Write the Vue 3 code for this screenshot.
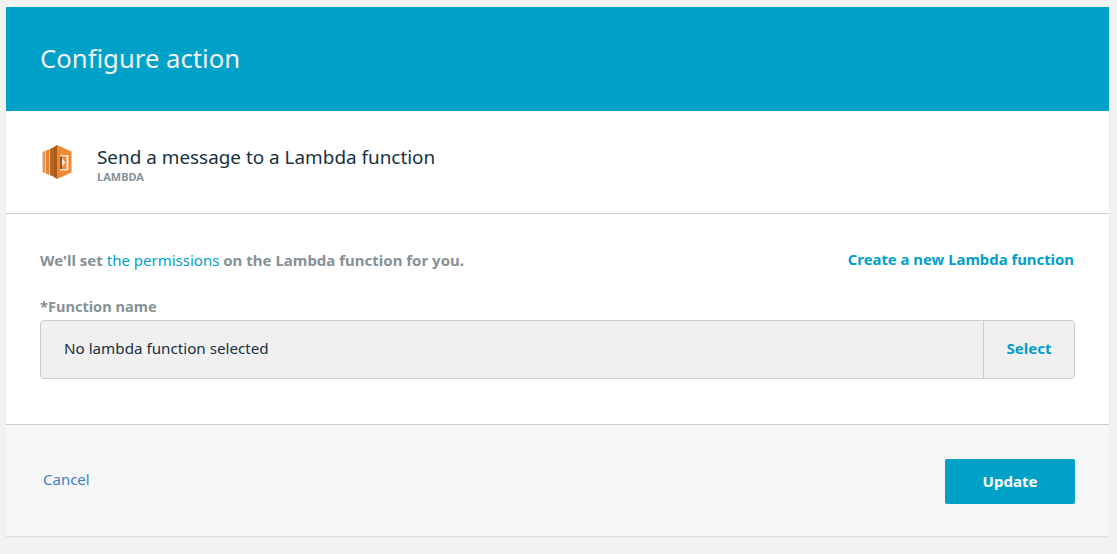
<template>
  <div class="page">
    <div class="card">
      <header class="card__head">
        <h1 class="card__title">Configure action</h1>
      </header>

      <div class="action">
        <svg class="action__icon" width="30" height="34" viewBox="0 0 30 34" aria-hidden="true">
          <path fill="#dd9a63" d="M.500 7 3.500 5.500v23l-3-1.500z" />
          <path fill="#e8842f" d="M4 5.500 7.500 4v26L4 28.500z" />
          <path fill="#b9651f" d="M8 4l4-2v30l-4-2z" />
          <path fill="#a85a1c" d="M12 2l3-2v34l-3-2z" />
          <path fill="#ee8a35" d="M15 0l14.500 6.500v21L15 34z" />
          <path fill="#fbe6d2" d="M18 10h8.500v15.500H18v-1.500h6.500V11.500H18z" />
          <path fill="#9c5218" d="M18 11.500h2V24h-2z" />
          <path fill="#fbe6d2" d="M20 13l3.500 4.500L20 22z" />
        </svg>
        <div class="action__text">
          <div class="action__name">Send a message to a Lambda function</div>
          <div class="action__service">LAMBDA</div>
        </div>
      </div>

      <section class="form">
        <div class="form__top">
          <p class="form__hint">We'll set <a class="form__inline-link">the permissions</a> on the Lambda function for you.</p>
          <a class="form__create">Create a new Lambda function</a>
        </div>
        <label class="form__label">*Function name</label>
        <div class="picker">
          <div class="picker__value">No lambda function selected</div>
          <button class="picker__btn" type="button">Select</button>
        </div>
      </section>

      <footer class="card__foot">
        <a class="cancel">Cancel</a>
        <button class="update" type="button">Update</button>
      </footer>
    </div>
  </div>
</template>

<script setup>
</script>

<style>
html, body {
  background: #f2f2f2;
}
</style>

<style scoped>
.page {
  box-sizing: border-box;
  width: 1117px;
  height: 554px;
  padding: 7px 8px 0 6px;
  background: #f2f2f2;
  font-family: "Noto Sans", "Open Sans", sans-serif;
  overflow: hidden;
}

.card {
  background: #fff;
  box-shadow: 0 1px 1px rgba(0, 0, 0, 0.08);
}

.card__head {
  height: 104px;
  padding: 0 34px;
  display: flex;
  align-items: center;
  background: #00a1c9;
}

.card__title {
  margin: 0;
  font-size: 25.700px;
  font-weight: 400;
  line-height: 34px;
  color: #f2f3f3;
}

.action {
  height: 102px;
  padding: 0 35px 0 36px;
  display: flex;
  align-items: center;
  border-bottom: 1px solid #ccc;
}

.action__icon {
  flex: none;
  margin-right: 25px;
  margin-top: -1px;
}

.action__text {
  padding-top: 5px;
}

.action__name {
  font-size: 18.900px;
  line-height: 24px;
  color: #16313f;
}

.action__service {
  font-size: 11px;
  font-weight: 700;
  line-height: 16px;
  color: #879196;
}

.form {
  height: 210px;
  box-sizing: border-box;
  padding: 34px 35px 0 34px;
}

.form__top {
  display: flex;
  justify-content: space-between;
  align-items: flex-start;
  height: 26px;
}

.form__hint {
  margin: 0;
  font-size: 15px;
  line-height: 24px;
  font-weight: 700;
  color: #879196;
}

.form__inline-link {
  font-weight: 400;
  color: #00a1c9;
}

.form__create {
  margin-top: -1px;
  font-size: 14.870px;
  line-height: 24px;
  font-weight: 700;
  color: #00a1c9;
}

.form__label {
  display: block;
  margin-top: 20px;
  padding-bottom: 2px;
  font-size: 14.600px;
  line-height: 24px;
  font-weight: 700;
  color: #879196;
}

.picker {
  display: flex;
  height: 59px;
  margin-right: -1px;
  box-sizing: border-box;
  border: 1px solid #ccc;
  border-radius: 4px;
  background: #f0f0f0;
}

.picker__value {
  flex: 1;
  padding-left: 23px;
  font-size: 15.200px;
  line-height: 55px;
  color: #16313f;
}

.picker__btn {
  width: 91px;
  padding: 0 0 4px;
  border: 0;
  border-left: 1px solid #ccc;
  background: none;
  font: inherit;
  font-size: 15px;
  font-weight: 700;
  color: #00a1c9;
}

.card__foot {
  height: 112px;
  box-sizing: border-box;
  padding: 0 34px 0 37px;
  display: flex;
  align-items: center;
  justify-content: space-between;
  background: #f6f6f6;
  border-top: 1px solid #ccc;
}

.cancel {
  margin-top: -3px;
  font-size: 15px;
  color: #3f7fbf;
}

.update {
  width: 130px;
  height: 45px;
  margin-top: 2px;
  padding: 0 0 2px;
  border: 0;
  border-radius: 2px;
  background: #00a1c9;
  font: inherit;
  font-size: 15px;
  font-weight: 700;
  color: #fff;
}
</style>
